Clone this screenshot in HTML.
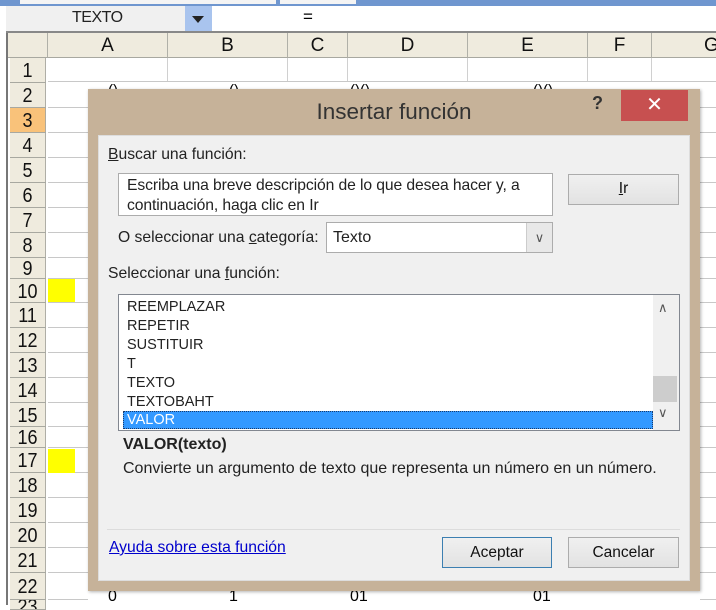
<!DOCTYPE html>
<html><head><style>
*{margin:0;padding:0;box-sizing:border-box}
body{width:716px;height:605px;overflow:hidden;background:#fff;font-family:"Liberation Sans",sans-serif;position:relative}
.a{position:absolute}
.rh{position:absolute;left:8px;width:40px;background:#efebde;border-bottom:1px solid #a8a8a0;border-right:1px solid #a8a8a0;font-size:20px;text-align:center;color:#111;transform:scaleX(.9)}
.ch{position:absolute;top:33px;height:25px;background:#efebde;border-right:1px solid #b0b0a8;border-bottom:1px solid #a8a8a0;font-size:19px;text-align:center;line-height:25px;color:#111}
.hl{position:absolute;height:1px;background:#c8c8c8}
.d{font-family:"Liberation Sans",sans-serif;font-size:15.7px;color:#222}
.btn{position:absolute;background:linear-gradient(#f0f0f0,#e2e2e2);border:1px solid #acacac;font-size:15.5px;text-align:center;color:#111}
</style></head><body>
<div class="a" style="left:0;top:0;width:716px;height:6px;background:#6f96cf"></div>
<div class="a" style="left:20px;top:0;width:256px;height:4px;background:#f4f4f4"></div>
<div class="a" style="left:280px;top:0;width:76px;height:4px;background:#f4f4f4"></div>
<div class="a" style="left:0;top:6px;width:716px;height:26px;background:#fff"></div>
<div class="a" style="left:6px;top:6px;width:179px;height:26px;background:#f0f0f0;font-size:16px;line-height:24px;padding-left:66px;color:#222;letter-spacing:-0.5px">TEXTO</div>
<div class="a" style="left:185px;top:6px;width:27px;height:26px;background:#a9c4ee"></div>
<div class="a" style="left:192px;top:16px;width:0;height:0;border-left:6px solid transparent;border-right:6px solid transparent;border-top:7px solid #222"></div>
<div class="a" style="left:303px;top:7px;font-size:17px">=</div>
<div class="a" style="left:6px;top:32px;width:2px;height:573px;background:#777"></div>
<div class="a" style="left:6px;top:31px;width:710px;height:2px;background:#888"></div>
<div class="ch" style="left:8px;width:40px"></div>
<div class="ch" style="left:48px;width:120px">A</div>
<div class="ch" style="left:168px;width:120px">B</div>
<div class="ch" style="left:288px;width:60px">C</div>
<div class="ch" style="left:348px;width:120px">D</div>
<div class="ch" style="left:468px;width:120px">E</div>
<div class="ch" style="left:588px;width:64px">F</div>
<div class="ch" style="left:652px;width:70px;text-align:left;padding-left:52px">G</div>
<div class="a" style="left:167px;top:58px;width:1px;height:23px;background:#d0d0d0"></div>
<div class="a" style="left:287px;top:58px;width:1px;height:23px;background:#d0d0d0"></div>
<div class="a" style="left:347px;top:58px;width:1px;height:23px;background:#d0d0d0"></div>
<div class="a" style="left:467px;top:58px;width:1px;height:23px;background:#d0d0d0"></div>
<div class="a" style="left:587px;top:58px;width:1px;height:23px;background:#d0d0d0"></div>
<div class="a" style="left:651px;top:58px;width:1px;height:23px;background:#d0d0d0"></div>
<div class="a" style="left:48px;top:81px;width:668px;height:1px;background:#c8c8c8"></div>
<div class="a" style="left:108px;top:82px;font-size:15px">()</div>
<div class="a" style="left:229px;top:82px;font-size:15px">()</div>
<div class="a" style="left:350px;top:82px;font-size:15px">()()</div>
<div class="a" style="left:533px;top:82px;font-size:15px">()()</div>
<div id="rows"></div>
<div class="a" style="left:48px;top:279px;width:27px;height:23px;background:#ffff00"></div>
<div class="a" style="left:48px;top:449px;width:27px;height:24px;background:#ffff00"></div>
<div class="a" style="left:108px;top:588px;font-size:16px">0</div>
<div class="a" style="left:229px;top:588px;font-size:16px">1</div>
<div class="a" style="left:350px;top:588px;font-size:16px">01</div>
<div class="a" style="left:533px;top:588px;font-size:16px">01</div>
<script>
var tops=[58,83,108,133,158,183,208,233,258,279,303,328,353,378,403,427,448,473,498,523,548,573,600];
var h='';
for(var i=0;i<22;i++){var t=tops[i],hh=tops[i+1]-t;
h+='<div class="rh" style="top:'+t+'px;height:'+hh+'px;line-height:'+(hh+2)+'px;'+(i==2?'background:#f9c27a;':'')+'">'+(i+1)+'</div>';
if(i>0){h+='<div class="hl" style="left:48px;top:'+(t+hh-1)+'px;width:40px"></div><div class="hl" style="left:700px;top:'+(t+hh-1)+'px;width:16px"></div>';}
}
h+='<div class="rh" style="top:600px;height:10px;line-height:14px;overflow:hidden">23</div>';
document.getElementById('rows').innerHTML=h;
</script>
<div class="a" style="left:88px;top:89px;width:612px;height:502px;background:#c6b299;box-shadow:1px 1px 3px rgba(0,0,0,.3)"></div>
<div class="a d" style="left:88px;top:99px;width:612px;text-align:center;font-size:22.5px;color:#333">Insertar función</div>
<div class="a" style="left:592px;top:93px;font-size:18px;font-weight:bold;color:#333">?</div>
<div class="a" style="left:621px;top:90px;width:67px;height:31px;background:#c75050;color:#fff;font-size:20px;text-align:center;line-height:30px">✕</div>
<div class="a" style="left:98px;top:135px;width:592px;height:446px;background:#f0f0f0;border:1px solid #ddd"></div>
<div class="a d" style="left:108px;top:146px"><u>B</u>uscar una función:</div>
<div class="a d" style="left:118px;top:173px;width:435px;height:43px;background:#fff;border:1px solid #acacac;padding:2px 0 0 8px;line-height:20px;letter-spacing:-0.1px">Escriba una breve descripción de lo que desea hacer y, a continuación, haga clic en Ir</div>
<div class="btn" style="left:568px;top:174px;width:111px;height:31px;line-height:28px"><u>I</u>r</div>
<div class="a d" style="left:118px;top:229px">O seleccionar una <u>c</u>ategoría:</div>
<div class="a d" style="left:326px;top:222px;width:227px;height:31px;background:#fff;border:1px solid #acacac;padding-left:6px;line-height:29px;font-size:16px">Texto</div>
<div class="a" style="left:526px;top:223px;width:26px;height:29px;background:#e8e8e8;border-left:1px solid #ccc;text-align:center;font-size:13px;line-height:29px;color:#555">&#8744;</div>
<div class="a d" style="left:108px;top:265px">Seleccionar una <u>f</u>unción:</div>
<div class="a" style="left:118px;top:294px;width:562px;height:137px;background:#fff;border:1px solid #828790"></div>
<div class="a d" style="left:127px;top:298px;line-height:19px;font-size:14.5px">REEMPLAZAR<br>REPETIR<br>SUSTITUIR<br>T<br>TEXTO<br>TEXTOBAHT</div>
<div class="a d" style="left:123px;top:411px;width:530px;height:18px;background:#3399ff;border:1px dotted #1a3a6a;color:#fff;padding-left:3px;line-height:17px;font-size:14.5px">VALOR</div>
<div class="a" style="left:653px;top:295px;width:26px;height:135px;background:#f0f0f0"></div>
<div class="a" style="left:653px;top:376px;width:24px;height:26px;background:#cdcdcd"></div>
<div class="a" style="left:658px;top:300px;font-size:13px;color:#555">&#8743;</div>
<div class="a" style="left:658px;top:405px;font-size:13px;color:#555">&#8744;</div>
<div class="a d" style="left:123px;top:436px;font-weight:bold;font-size:16px">VALOR(texto)</div>
<div class="a d" style="left:123px;top:460px;font-size:16px">Convierte un argumento de texto que representa un número en un número.</div>
<div class="a" style="left:107px;top:529px;width:573px;height:1px;background:#dcdcdc"></div>
<div class="a d" style="left:109px;top:539px;color:#0000cc;text-decoration:underline">Ayuda sobre esta función</div>
<div class="btn" style="left:442px;top:537px;width:110px;height:31px;line-height:29px;border-color:#3c7fb1">Aceptar</div>
<div class="btn" style="left:568px;top:537px;width:111px;height:31px;line-height:29px">Cancelar</div>
</body></html>
